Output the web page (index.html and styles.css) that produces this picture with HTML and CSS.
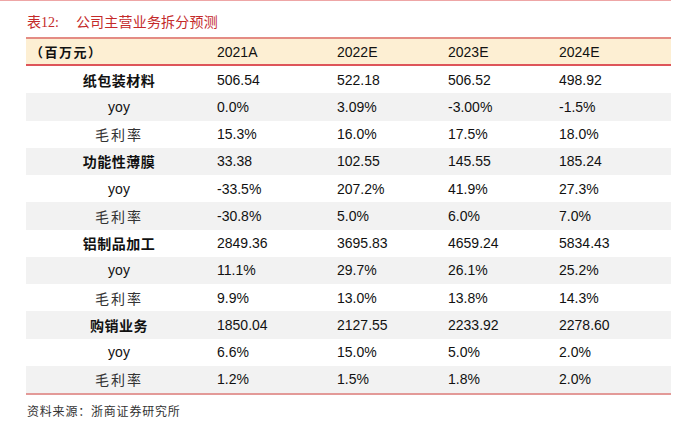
FILE: index.html
```html
<!DOCTYPE html>
<html lang="zh">
<head>
<meta charset="utf-8">
<link rel="stylesheet" href="styles.css">
</head>
<body>
<div class="topline"></div>
<div class="title"><span class="tnum">表12:</span><span class="ttext">公司主营业务拆分预测</span></div>
<div class="table">
  <div class="row head">
    <div class="c label-left">（百万元）</div>
    <div class="c">2021A</div>
    <div class="c">2022E</div>
    <div class="c">2023E</div>
    <div class="c">2024E</div>
  </div>
  <div class="row">
    <div class="c seg">纸包装材料</div><div class="c">506.54</div><div class="c">522.18</div><div class="c">506.52</div><div class="c">498.92</div>
  </div>
  <div class="row gray">
    <div class="c sub">yoy</div><div class="c">0.0%</div><div class="c">3.09%</div><div class="c">-3.00%</div><div class="c">-1.5%</div>
  </div>
  <div class="row">
    <div class="c sub cn">毛利率</div><div class="c">15.3%</div><div class="c">16.0%</div><div class="c">17.5%</div><div class="c">18.0%</div>
  </div>
  <div class="row gray">
    <div class="c seg">功能性薄膜</div><div class="c">33.38</div><div class="c">102.55</div><div class="c">145.55</div><div class="c">185.24</div>
  </div>
  <div class="row">
    <div class="c sub">yoy</div><div class="c">-33.5%</div><div class="c">207.2%</div><div class="c">41.9%</div><div class="c">27.3%</div>
  </div>
  <div class="row gray">
    <div class="c sub cn">毛利率</div><div class="c">-30.8%</div><div class="c">5.0%</div><div class="c">6.0%</div><div class="c">7.0%</div>
  </div>
  <div class="row">
    <div class="c seg">铝制品加工</div><div class="c">2849.36</div><div class="c">3695.83</div><div class="c">4659.24</div><div class="c">5834.43</div>
  </div>
  <div class="row gray">
    <div class="c sub">yoy</div><div class="c">11.1%</div><div class="c">29.7%</div><div class="c">26.1%</div><div class="c">25.2%</div>
  </div>
  <div class="row">
    <div class="c sub cn">毛利率</div><div class="c">9.9%</div><div class="c">13.0%</div><div class="c">13.8%</div><div class="c">14.3%</div>
  </div>
  <div class="row gray">
    <div class="c seg">购销业务</div><div class="c">1850.04</div><div class="c">2127.55</div><div class="c">2233.92</div><div class="c">2278.60</div>
  </div>
  <div class="row">
    <div class="c sub">yoy</div><div class="c">6.6%</div><div class="c">15.0%</div><div class="c">5.0%</div><div class="c">2.0%</div>
  </div>
  <div class="row gray last">
    <div class="c sub cn">毛利率</div><div class="c">1.2%</div><div class="c">1.5%</div><div class="c">1.8%</div><div class="c">2.0%</div>
  </div>
</div>
<div class="source">资料来源：浙商证券研究所</div>
</body>
</html>
```
FILE: styles.css
```css
html, body {
  margin: 0;
  padding: 0;
  background: #ffffff;
}
body {
  width: 691px;
  height: 428px;
  overflow: hidden;
  font-family: "Liberation Sans", Arial, "Noto Sans CJK SC", sans-serif;
  color: #111111;
}
.topline {
  width: 671px;
  height: 1px;
  background: #eea6a6;
}
.title {
  height: 36px;
  box-sizing: border-box;
  padding: 13px 0 0 27px;
  font-family: "Liberation Serif", "Noto Sans CJK SC", serif;
  font-size: 14px;
  line-height: 18px;
  color: #c42a2a;
  white-space: nowrap;
}
.ttext {
  margin-left: 17px;
  letter-spacing: 0.2px;
}
.table {
  margin-left: 26px;
  width: 645px;
  border-bottom: 2px solid #e39a98;
}
.row {
  display: grid;
  grid-template-columns: 186px 120px 111px 111px 117px;
  height: 27.25px;
  align-items: center;
  font-size: 14px;
}
.row.gray {
  background: #f2f2f2;
}
.row.head {
  height: 29px;
  box-sizing: border-box;
  border-top: 2px solid #e48c84;
  border-bottom: 2px solid #de555a;
  background: #fdefd3;
}
.c {
  padding-left: 5px;
  white-space: nowrap;
}
.label-left {
  padding-left: 4px;
  font-family: "Noto Sans CJK SC", sans-serif;
  font-weight: 700;
  font-size: 13px;
  letter-spacing: 1.5px;
}
.seg {
  padding-left: 0;
  text-align: center;
  font-family: "Noto Sans CJK SC", sans-serif;
  font-weight: 700;
  letter-spacing: 0.5px;
}
.sub {
  padding-left: 0;
  text-align: center;
}
.cn {
  font-family: "Noto Sans CJK SC", sans-serif;
  font-weight: 400;
  color: #333333;
  letter-spacing: 2px;
}
.source {
  padding: 7px 0 0 27px;
  font-family: "Noto Sans CJK SC", sans-serif;
  font-size: 12px;
  color: #333333;
  letter-spacing: 0.8px;
}
```
